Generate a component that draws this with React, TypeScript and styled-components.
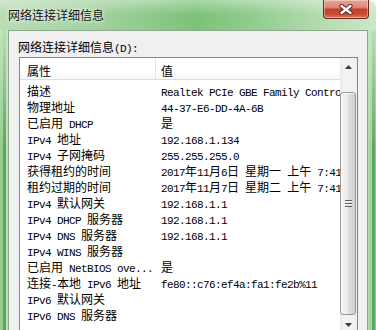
import React from 'react';
import styled, { createGlobalStyle } from 'styled-components';

const Global = createGlobalStyle`
  html, body { margin: 0; padding: 0; background: #ffffff; }
  body {
    width: 376px; height: 330px; overflow: hidden;
    font-family: "Noto Sans CJK SC", "Noto Sans", sans-serif;
    font-size: 12px; color: #000;
  }
`;

const Window = styled.div`
  width: 376px;
  height: 330px;
  display: flex;
  flex-direction: column;
  overflow: hidden;
  border-top-right-radius: 7px;
  background:
    linear-gradient(to bottom, rgba(255,255,255,0.35) 0px, rgba(255,255,255,0) 14px),
    linear-gradient(to right, #b9ddb5 0%, #a9d5a5 18%, #92cb8f 38%, #7cc27a 52%, #93cd90 68%, #b4dbb0 85%, #cbe7c7 100%);
`;

const TitleBar = styled.div`
  height: 30px;
  flex: none;
  display: flex;
  align-items: center;
  padding-left: 8px;
  box-sizing: border-box;
`;

const TitleText = styled.span`
  font-size: 12px;
  line-height: 16px;
  margin-bottom: 1px;
  color: #111;
  text-shadow: 0 0 6px rgba(255,255,255,0.9), 0 0 3px rgba(255,255,255,0.8);
`;

const CloseButton = styled.div`
  margin-left: auto;
  margin-right: 7px;
  align-self: flex-start;
  width: 46px;
  height: 19px;
  box-sizing: border-box;
  border: 1px solid #6a2a22;
  border-top: none;
  border-radius: 0 0 4px 4px;
  background: linear-gradient(to bottom, #e8a496 0%, #dc8a78 40%, #c4402a 52%, #c84a32 78%, #e07a5e 100%);
  box-shadow: inset 0 0 0 1px rgba(255,255,255,0.35);
  display: flex;
  align-items: center;
  justify-content: center;
`;

const Frame = styled.div`
  flex: 1;
  display: flex;
  min-height: 0;
`;

const LeftEdge = styled.div`
  width: 8px;
  flex: none;
  background:
    linear-gradient(to bottom, rgba(200,232,196,0.85) 0px, rgba(200,232,196,0) 120px),
    linear-gradient(to right, #96cc92 0px, #96cc92 3px, #5aa65a 3px, #5aa65a 6px, #bddfb8 6px, #bddfb8 8px);
`;

const RightEdge = styled.div`
  width: 8px;
  flex: none;
  background:
    linear-gradient(to bottom, rgba(200,232,196,0.85) 0px, rgba(200,232,196,0) 120px),
    linear-gradient(to right, #bfe0ba 0px, #a6d4a1 1px, #a6d4a1 4px, #5ca85c 4px, #5ca85c 7px, #8fc98b 7px);
`;

const Content = styled.div`
  flex: 1;
  min-width: 0;
  background: #f0f0f0;
  border: 1px solid #8ea88e;
  border-bottom: none;
  padding-left: 10px;
  display: flex;
  flex-direction: column;
  overflow: hidden;
`;

const Label = styled.div`
  margin-top: 8px;
  margin-left: -1px;
  height: 16px;
  line-height: 16px;
  white-space: nowrap;
`;

const ListView = styled.div`
  margin-top: 2px;
  width: 339px;
  height: 277px;
  flex: none;
  box-sizing: border-box;
  border: 1px solid #828790;
  background: #fff;
  display: flex;
`;

const ListArea = styled.div`
  flex: 1;
  min-width: 0;
  display: flex;
  flex-direction: column;
  overflow: hidden;
`;

const Header = styled.div`
  height: 22px;
  box-sizing: border-box;
  border-bottom: 1px solid #dcdcdc;
  display: flex;
  background: linear-gradient(to bottom, #ffffff 0%, #ffffff 60%, #f7f8fa 100%);
`;

const HeaderCell = styled.div<{ $first?: boolean }>`
  box-sizing: border-box;
  padding-top: 5px;
  line-height: 16px;
  white-space: nowrap;
  ${(p) => (p.$first ? 'width: 136px; padding-left: 7px; border-right: 1px solid #e5e5e5;' : 'flex: 1; padding-left: 5px;')}
`;

const Rows = styled.div`
  padding-top: 3px;
  display: flex;
  flex-direction: column;
`;

const Row = styled.div`
  height: 16px;
  display: flex;
  line-height: 16px;
  white-space: nowrap;
`;

const Cell = styled.div<{ $first?: boolean }>`
  box-sizing: border-box;
  overflow: hidden;
  white-space: nowrap;
  height: 16px;
  ${(p) => (p.$first ? 'width: 136px; flex: none; padding-left: 7px;' : 'flex: 1; min-width: 0; padding-left: 5px;')}
`;

const Latin = styled.span`
  font-family: "Liberation Mono", monospace;
  font-size: 11px;
  letter-spacing: -0.6px;
`;

const ScrollBar = styled.div`
  width: 17px;
  flex: none;
  display: flex;
  flex-direction: column;
  background: linear-gradient(to right, #e9e9e9 0px, #f2f2f2 3px, #f2f2f2 14px, #ececec 17px);
`;

const ScrollButton = styled.div`
  height: 17px;
  flex: none;
  display: flex;
  align-items: center;
  justify-content: center;
`;

const Track = styled.div`
  flex: 1;
  padding-top: 17px;
  display: flex;
  flex-direction: column;
`;

const Thumb = styled.div`
  height: 223px;
  margin: 0 1px 0 0;
  box-sizing: border-box;
  border: 1px solid #979797;
  border-radius: 3px;
  background: linear-gradient(to right, #f5f5f5 0%, #ececec 45%, #dcdcdc 55%, #d2d2d2 100%);
  box-shadow: inset 1px 1px 0 rgba(255,255,255,0.8);
  display: flex;
  align-items: center;
  justify-content: center;
`;

const Grip = styled.div`
  width: 7px;
  height: 7px;
  background: repeating-linear-gradient(to bottom, #5e5e5e 0px, #5e5e5e 1px, #f6f6f6 1px, #f6f6f6 2px, transparent 2px, transparent 3px);
`;

const Mixed = ({ text }: { text: string }) => {
  const parts = text.split(/([\x20-\x7e]+)/).filter(Boolean);
  return (
    <>
      {parts.map((p, i) =>
        /^[\x20-\x7e]+$/.test(p) ? <Latin key={i}>{p}</Latin> : <span key={i}>{p}</span>
      )}
    </>
  );
};

const rows: [string, string][] = [
  ['描述', 'Realtek PCIe GBE Family Controller'],
  ['物理地址', '44-37-E6-DD-4A-6B'],
  ['已启用 DHCP', '是'],
  ['IPv4 地址', '192.168.1.134'],
  ['IPv4 子网掩码', '255.255.255.0'],
  ['获得租约的时间', '2017年11月6日 星期一 上午 7:41:56'],
  ['租约过期的时间', '2017年11月7日 星期二 上午 7:41:56'],
  ['IPv4 默认网关', '192.168.1.1'],
  ['IPv4 DHCP 服务器', '192.168.1.1'],
  ['IPv4 DNS 服务器', '192.168.1.1'],
  ['IPv4 WINS 服务器', ''],
  ['已启用 NetBIOS ove...', '是'],
  ['连接-本地 IPv6 地址', 'fe80::c76:ef4a:fa1:fe2b%11'],
  ['IPv6 默认网关', ''],
  ['IPv6 DNS 服务器', ''],
];

const Arrow = ({ up }: { up?: boolean }) => (
  <svg width="7" height="4" viewBox="0 0 7 4">
    {up ? <path d="M3.5 0 L7 4 L0 4 Z" fill="#3a3a3a" /> : <path d="M0 0 L7 0 L3.5 4 Z" fill="#3a3a3a" />}
  </svg>
);

export default function App() {
  return (
    <>
      <Global />
      <Window>
        <TitleBar>
          <TitleText>网络连接详细信息</TitleText>
          <CloseButton>
            <svg width="14" height="11" viewBox="0 0 14 11">
              <path d="M2.5 2 L11.5 9 M11.5 2 L2.5 9" stroke="#5a2018" strokeWidth="4.2" strokeLinecap="round" />
              <path d="M2.5 2 L11.5 9 M11.5 2 L2.5 9" stroke="#ffffff" strokeWidth="2.4" strokeLinecap="round" />
            </svg>
          </CloseButton>
        </TitleBar>
        <Frame>
          <LeftEdge />
          <Content>
            <Label>
              <Mixed text="网络连接详细信息(D):" />
            </Label>
            <ListView>
              <ListArea>
                <Header>
                  <HeaderCell $first>属性</HeaderCell>
                  <HeaderCell>值</HeaderCell>
                </Header>
                <Rows>
                  {rows.map(([k, v], i) => (
                    <Row key={i}>
                      <Cell $first>
                        <Mixed text={k} />
                      </Cell>
                      <Cell>
                        <Mixed text={v} />
                      </Cell>
                    </Row>
                  ))}
                </Rows>
              </ListArea>
              <ScrollBar>
                <ScrollButton>
                  <Arrow up />
                </ScrollButton>
                <Track>
                  <Thumb>
                    <Grip />
                  </Thumb>
                </Track>
                <ScrollButton>
                  <Arrow />
                </ScrollButton>
              </ScrollBar>
            </ListView>
          </Content>
          <RightEdge />
        </Frame>
      </Window>
    </>
  );
}
